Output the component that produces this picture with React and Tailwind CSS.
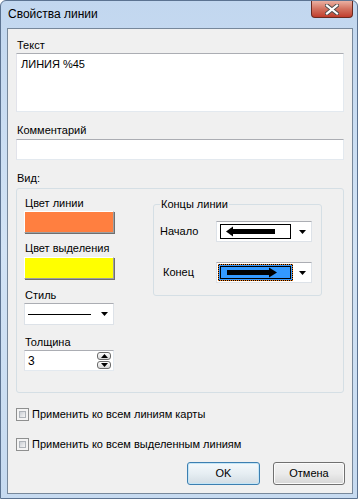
import React from 'react';

const Arrow = () => (
    <svg width="7" height="4" viewBox="0 0 7 4">
        <polygon points="0,0 7,0 3.5,4" fill="#000" />
    </svg>
);

const Combo = ({ className, children }) => (
    <div className={`flex items-center bg-white border border-[#dde2e8] border-t-[#abadb3] ${className}`}>
        <div className="flex-1 flex items-center h-full">{children}</div>
        <div className="w-[18px] flex justify-center">
            <Arrow />
        </div>
    </div>
);

const ColorButton = ({ color }) => (
    <div className="w-[90px] h-[22px] border border-t-white border-l-white border-r-[#a0a0a0] border-b-[#a0a0a0] shadow-[1px_1px_0_#6f6f6f]" style={{ backgroundColor: color }} />
);

const CheckBox = () => (
    <div className="w-[13px] h-[13px] border border-[#8e8f8f] bg-[#f4f4f4] p-[2px]">
        <div className="w-full h-full border border-[#aeb3b9] bg-gradient-to-br from-[#cbcfd5] to-[#f6f6f6]" />
    </div>
);

const Label = ({ className = '', children }) => (
    <div className={`h-[14px] leading-[14px] ml-px ${className}`}>{children}</div>
);

const App = () => {
    return (
        <div className="w-[360px] h-[501px] bg-white font-['Liberation_Sans',Arial,sans-serif] text-[11px] text-black">
            <div className="w-[358px] h-[499px] border border-[#5c7391] rounded-t-[6px] bg-gradient-to-b from-[#c2d7ef] via-[#d2e3f5] to-[#c6daf0] flex flex-col">
                {/* title bar */}
                <div className="h-[27px] flex items-start justify-between">
                    <div className="pl-[7px] pt-[6px] text-[12px] leading-[15px]">Свойства линии</div>
                    <div className="mr-[4px] w-[42px] h-[17px] border border-[#6a2a20] border-t-0 rounded-b-[4px] bg-gradient-to-b from-[#eab0a2] via-[#d2715f] to-[#c03c2b] flex items-center justify-center">
                        <svg width="14" height="11" viewBox="0 0 14 11">
                            <path d="M2 1.5 L12 9.5 M12 1.5 L2 9.5" stroke="#4a4a4a" strokeWidth="4" strokeLinecap="square" />
                            <path d="M2 1.5 L12 9.5 M12 1.5 L2 9.5" stroke="#fff" strokeWidth="2.2" strokeLinecap="square" />
                        </svg>
                    </div>
                </div>

                {/* client area */}
                <div className="ml-[6px] mr-[4px] h-[466px] border border-[#77889b] bg-[#f0f0f0] px-[8px] pt-[9px]">
                    <Label>Текст</Label>
                    <div className="mt-px h-[59px] bg-white border border-[#e3e9ef] border-t-[#abadb3] border-l-[#e2e3ea] pl-[4px] pt-[3px] leading-[14px]">
                        ЛИНИЯ %45
                    </div>

                    <Label className="mt-[11px]">Комментарий</Label>
                    <div className="mt-[2px] h-[21px] bg-white border border-[#e3e9ef] border-t-[#abadb3] border-l-[#e2e3ea]" />

                    <Label className="mt-[11px]">Вид:</Label>
                    <div className="mt-[3px] h-[205px] border border-[#d5dfe5] rounded-[3px] pl-[7px] pt-[7px] flex">
                        <div className="w-[90px] flex flex-col">
                            <Label>Цвет линии</Label>
                            <div className="mt-px"><ColorButton color="#ff7f40" /></div>
                            <Label className="mt-[8px]">Цвет выделения</Label>
                            <div className="mt-[2px]"><ColorButton color="#ffff00" /></div>
                            <Label className="mt-[9px]">Стиль</Label>
                            <Combo className="mt-px h-[22px]">
                                <div className="ml-[3px] w-[63px] h-px bg-black" />
                            </Combo>
                            <Label className="mt-[10px]">Толщина</Label>
                            <div className="mt-px h-[21px] bg-white border border-[#e3e9ef] border-t-[#abadb3] border-l-[#e2e3ea] flex items-center justify-between pl-[3px] pr-[2px]">
                                <span className="text-[12px] leading-[14px]">3</span>
                                <div className="flex flex-col gap-px">
                                    <div className="w-[14px] h-[8px] border border-[#6b6b6b] rounded-[3px] bg-gradient-to-b from-white to-[#d6d6d6] flex items-center justify-center">
                                        <svg width="7" height="4" viewBox="0 0 7 4"><polygon points="0,4 7,4 3.5,0" fill="#000" /></svg>
                                    </div>
                                    <div className="w-[14px] h-[8px] border border-[#6b6b6b] rounded-[3px] bg-gradient-to-b from-white to-[#d6d6d6] flex items-center justify-center">
                                        <Arrow />
                                    </div>
                                </div>
                            </div>
                        </div>

                        <div className="ml-[39px] mt-[8px] w-[169px] h-[92px] border border-[#d5dfe5] rounded-[3px] relative pl-[6px] pt-[16px]">
                            <span className="absolute left-[6px] top-[-8px] px-px bg-[#f0f0f0] leading-[14px]">Концы линии</span>
                            <div className="flex items-center">
                                <div className="w-[56px]">Начало</div>
                                <Combo className="w-[96px] h-[21px]">
                                    <div className="ml-[3px] w-[71px] h-[15px] border border-black bg-white flex items-center">
                                        <svg width="69" height="13" viewBox="0 0 69 13">
                                            <polygon points="5,6.5 12,1.5 12,11.5" fill="#000" />
                                            <rect x="11" y="4" width="43" height="5" fill="#000" />
                                        </svg>
                                    </div>
                                </Combo>
                            </div>
                            <div className="flex items-center mt-[20px]">
                                <div className="w-[56px] pl-[3px]">Конец</div>
                                <Combo className="w-[96px] h-[21px]">
                                    {/* focus rectangle: orange dots over black */}
                                    <div className="ml-px w-[75px] h-[17px] bg-black">
                                        <div className="w-full h-full border border-dotted border-[#f08020]">
                                            <div className="w-full h-full bg-[#3399ff] p-px">
                                                <div className="w-full h-full border border-black flex items-center">
                                                    <svg width="69" height="11" viewBox="0 0 69 11">
                                                        <rect x="6" y="3" width="42" height="5" fill="#000" />
                                                        <polygon points="56,5.5 48,0.5 48,10.5" fill="#000" />
                                                    </svg>
                                                </div>
                                            </div>
                                        </div>
                                    </div>
                                </Combo>
                            </div>
                        </div>
                    </div>

                    <div className="mt-[14px] h-[14px] flex items-center gap-[3px]">
                        <CheckBox />
                        <span className="leading-[14px]">Применить ко всем линиям карты</span>
                    </div>
                    <div className="mt-[16px] h-[14px] flex items-center gap-[3px]">
                        <CheckBox />
                        <span className="leading-[14px]">Применить ко всем выделенным линиям</span>
                    </div>

                    <div className="mt-[11px] flex justify-end gap-[13px] -mr-px">
                        <button className="w-[73px] h-[23px] rounded-[3px] border border-[#3c7fb1] bg-gradient-to-b from-[#f4f9fc] via-[#e6eef3] to-[#d3dde4] shadow-[inset_0_0_0_1px_#c4e5f6]">
                            OK
                        </button>
                        <button className="w-[72px] h-[23px] rounded-[3px] border border-[#707070] bg-gradient-to-b from-[#f2f2f2] via-[#ebebeb] to-[#d6d6d6] shadow-[inset_0_0_0_1px_#fbfbfb]">
                            Отмена
                        </button>
                    </div>
                </div>
            </div>
        </div>
    );
};

export default App;
